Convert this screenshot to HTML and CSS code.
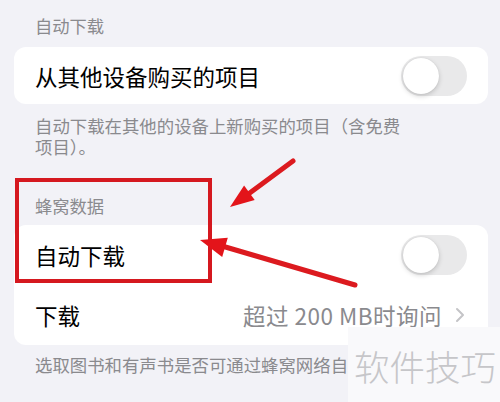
FILE: index.html
```html
<!DOCTYPE html>
<html lang="zh-CN">
<head>
    <meta charset="UTF-8">
    <meta name="viewport" content="width=device-width, initial-scale=1.0">
    <title>图书</title>
    <link rel="stylesheet" href="styles.css">
</head>
<body>
    <div class="page">
        <div class="section-title first">自动下载</div>
        <div class="card">
            <div class="row single">
                <span class="row-label">从其他设备购买的项目</span>
                <div class="toggle"><div class="knob"></div></div>
            </div>
        </div>
        <div class="section-footer">自动下载在其他的设备上新购买的项目（含免费项目）。</div>

        <div class="section-title second">蜂窝数据</div>
        <div class="card">
            <div class="row">
                <span class="row-label">自动下载</span>
                <div class="toggle"><div class="knob"></div></div>
            </div>
            <div class="row">
                <span class="row-label">下载</span>
                <span class="row-value">超过 200 MB时询问
                    <svg class="chevron" width="10" height="16" viewBox="0 0 10 16">
                        <polyline points="2,2 8,8 2,14" fill="none" stroke="#c4c4c7" stroke-width="2" stroke-linecap="round" stroke-linejoin="round"/>
                    </svg>
                </span>
            </div>
        </div>
        <div class="section-footer last">选取图书和有声书是否可通过蜂窝网络自</div>
    </div>

    <!-- marcas rojas encima de la captura -->
    <div class="highlight-box"></div>
    <svg class="arrows" width="500" height="402" viewBox="0 0 500 402">
        <line x1="293" y1="161" x2="247" y2="195" stroke="#dc1a1f" stroke-width="5" stroke-linecap="round"/>
        <polygon points="230,207 254.7,200.1 244.1,185.5" fill="#e3141a"/>
        <line x1="355" y1="285" x2="222" y2="246" stroke="#dc1a1f" stroke-width="5" stroke-linecap="round"/>
        <polygon points="200,240 227.8,237.7 222.2,256.9" fill="#e3141a"/>
    </svg>

    <div class="watermark">软件技巧</div>
</body>
</html>
```

FILE: styles.css
```css
* {
    box-sizing: border-box;
}

body {
    margin: 0;
    width: 500px;
    height: 402px;
    overflow: hidden;
    position: relative;
    background: #f2f2f7;
    font-family: "Noto Sans CJK SC", "Noto Sans", sans-serif;
}

.page {
    padding: 0 12px 0 14px;
}

.section-title {
    height: 22px;
    line-height: 22px;
    padding-left: 21px;
    font-size: 17.3px;
    color: #8a8a8e;
}

.section-title.first {
    margin-top: 15px;
    margin-bottom: 10px;
}

.section-title.second {
    margin-top: 38px;
    margin-bottom: 8px;
}

.card {
    background: #fff;
    border-radius: 12px;
    overflow: hidden;
}

.row {
    height: 60px;
    display: flex;
    align-items: center;
    justify-content: space-between;
    padding: 0 21px;
}

.row.single {
    height: 57px;
}

.row-label {
    font-size: 22.5px;
    color: #000;
}

.row-value {
    display: flex;
    align-items: center;
    gap: 13px;
    font-size: 22.5px;
    letter-spacing: 0.5px;
    color: #8a8a8e;
}

.chevron {
    margin-right: 2px;
}

.toggle {
    width: 66px;
    height: 40px;
    border-radius: 20px;
    background: #e9e9ea;
    padding: 2px;
}

.knob {
    width: 36px;
    height: 36px;
    border-radius: 50%;
    background: #fff;
    box-shadow: 0 2px 5px rgba(0,0,0,0.18), 0 0 1px rgba(0,0,0,0.12);
}

.section-footer {
    width: 390px;
    margin-top: 11px;
    padding-left: 21px;
    font-size: 17.4px;
    line-height: 21px;
    color: #8a8a8e;
}

.section-footer.last {
    width: 334px;
    margin-top: 9px;
    white-space: nowrap;
}

.highlight-box {
    position: absolute;
    left: 15px;
    top: 178px;
    width: 197px;
    height: 105px;
    border: 4px solid #d5181f;
}

.arrows {
    position: absolute;
    left: 0;
    top: 0;
    pointer-events: none;
}

.watermark {
    position: absolute;
    left: 348px;
    top: 327px;
    width: 152px;
    height: 75px;
    padding-left: 6px;
    padding-top: 14px;
    background: #f9f9fb;
    font-size: 35.5px;
    line-height: 50px;
    color: #c6c6c9;
    font-weight: 300;
}
```
